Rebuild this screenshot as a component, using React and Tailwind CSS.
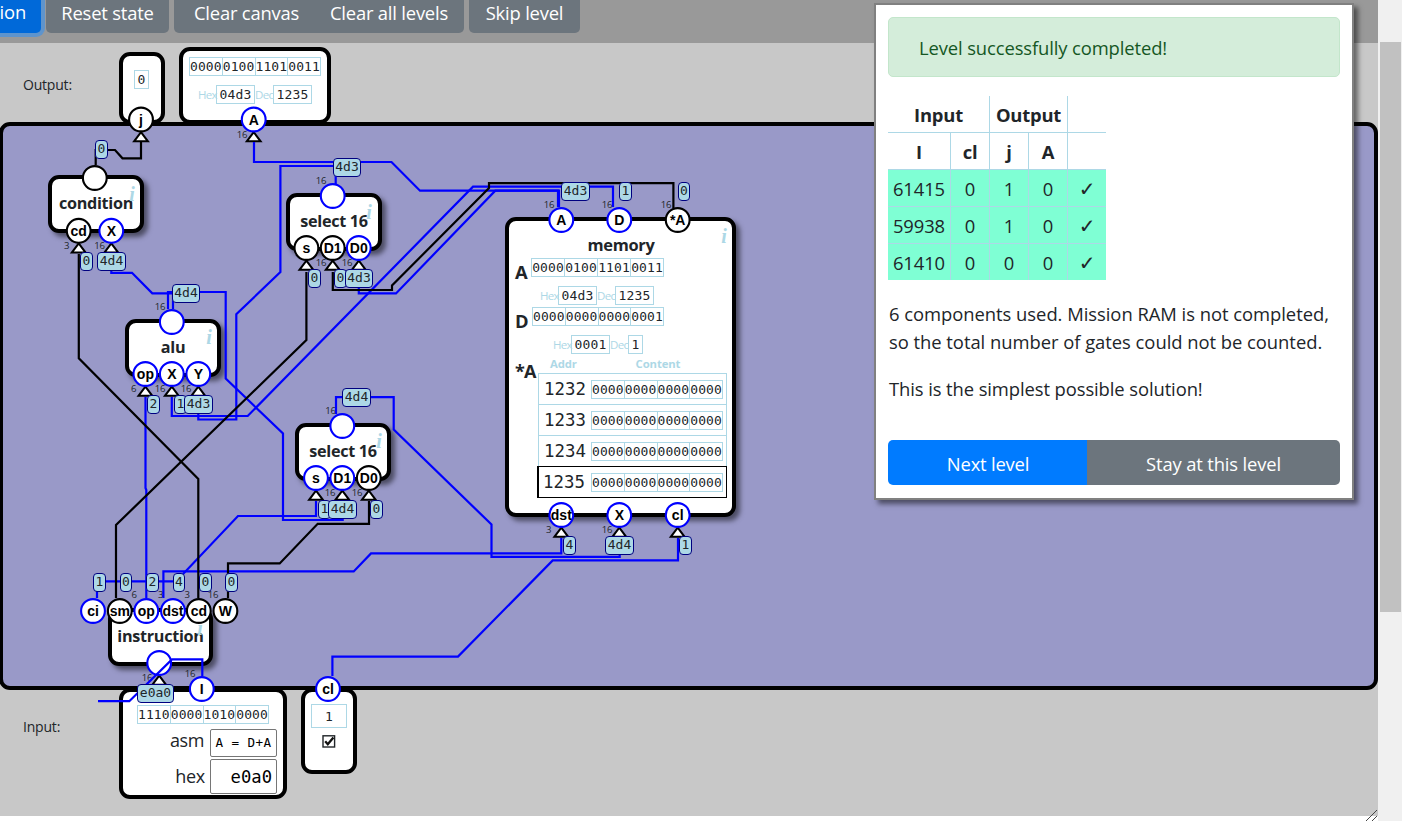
import React from "react";

const BLUE = "#0000ff";
const BLACK = "#000000";

// Wires of the circuit, in canvas coordinates
const wires = [
  { c: BLUE, p: "254,142 254,162 391.5,162 420,190.7 558,190.7 558,207" },
  { c: BLUE, p: "335.7,184 335.7,166 280.4,166 280.4,272 236.3,314.3 236.3,419.5 198.3,419.5 198.3,397" },
  { c: BLUE, p: "613,207 613,186.7 473,186.7 247.7,416 171.8,416 171.8,397" },
  { c: BLUE, p: "559,207 559,190.7 495.3,190.7 396,293.4 358.8,293.4 358.8,272" },
  { c: BLUE, p: "173,309 173,293.3 152.3,293.3 132,272.8 111.3,272.8 111.3,254" },
  { c: BLUE, p: "168,309 168,292 225.7,292 225.7,378.5 283,433.5 283,520 342.7,520 342.7,502" },
  { c: BLUE, p: "145.5,397 145.5,488 146.3,490 146.3,598" },
  { c: BLUE, p: "336,414 336,397.2 393.7,397.2 393.7,429.5 491.5,524.5 491.5,556.8 619.7,556.8 619.7,538" },
  { c: BLUE, p: "97,598 97,581.4 176,581.4 238,516 316,516 316,501" },
  { c: BLUE, p: "163.4,598 163.4,571.4 353.7,571.4 371,553.4 561.3,553.4 561.3,538" },
  { c: BLUE, p: "332.4,676 332.4,656.6 458,656.6 552.7,560.4 678,560.4 678,538" },
  { c: BLUE, p: "202.3,676 202.3,659.4 172,659.4 129.3,701.2 98,701.2" },
  { c: BLACK, p: "95.7,165 95.7,150 115,150 122.5,158.3 141,158.3 141,142" },
  { c: BLACK, p: "673.4,208 673.4,183.2 489,183.2 489,188 392,285.5 392,290 332.8,290 332.8,272" },
  { c: BLACK, p: "306.4,272 306.4,340 116,525 116,598" },
  { c: BLACK, p: "78.8,254 78.8,358.3 198.3,479 198.3,598" },
  { c: BLACK, p: "228,598 228,563.4 279.7,563.4 317.7,523.8 369,523.8 369,501" },
];

// Pins: centre, caption, blue when carrying a value, arrow for inputs
const pins = [
  [141, 119.5, "j", 0, 1], [253.7, 119.5, "A", 1, 1],
  [94.8, 178, "", 0, 0], [78.7, 230.8, "cd", 0, 1], [111.3, 230.8, "X", 1, 1],
  [332.7, 196, "", 1, 0], [306.4, 248, "s", 0, 1], [332.7, 248, "D1", 0, 1], [358.8, 248, "D0", 1, 1],
  [171.8, 322, "", 1, 0], [145.4, 374, "op", 1, 1], [171.8, 374, "X", 1, 1], [198.3, 374, "Y", 1, 1],
  [342.3, 426, "", 1, 0], [316, 478, "s", 1, 1], [342.3, 478, "D1", 1, 1], [368.8, 478, "D0", 0, 1],
  [561.3, 220, "A", 1, 0], [619.3, 220, "D", 1, 0], [677.7, 220, "*A", 0, 0],
  [561.3, 515, "dst", 1, 1], [619.3, 515, "X", 1, 1], [677.7, 515, "cl", 1, 1],
  [93, 611, "ci", 1, 0], [119.8, 611, "sm", 0, 0], [146.3, 611, "op", 1, 0],
  [173, 611, "dst", 1, 0], [198.8, 611, "cd", 0, 0], [225.4, 611, "W", 0, 0],
  [159.2, 663, "", 1, 1], [201.8, 689, "I", 1, 0], [328, 689, "cl", 1, 0],
];

// Values on the wires: x, y, width, text
const values = [
  [95, 140, 13, "0"], [333, 158, 28, "4d3"], [80, 252, 13, "0"], [97, 252, 29, "4d4"],
  [172, 284, 28, "4d4"], [147, 395, 13, "2"], [174, 395, 13, "1"], [184, 395, 29, "4d3"],
  [308, 269, 13, "0"], [334, 269, 13, "0"], [345, 269, 28, "4d3"],
  [342, 388, 29, "4d4"], [318, 500, 13, "1"], [328, 500, 29, "4d4"], [370, 500, 13, "0"],
  [561, 182, 29, "4d3"], [619, 182, 13, "1"], [678, 182, 12, "0"],
  [563, 536, 13, "4"], [605, 536, 29, "4d4"], [679, 536, 13, "1"],
  [93, 573, 13, "1"], [120, 573, 12, "0"], [146, 573, 13, "2"],
  [173, 573, 12, "4"], [199, 573, 13, "0"], [225, 573, 13, "0"],
  [137, 684, 37, "e0a0"],
];

// Bus widths: right edge, vertical centre, bits
const widths = [
  [247, 135, 16], [69, 246, 3], [104.5, 246, 16], [326, 181, 16], [326, 263, 16], [352, 263, 16],
  [165, 306.5, 16], [136, 389, 6], [165, 389, 16], [191, 389, 16], [335.5, 411, 16], [335, 493, 16],
  [362, 493, 16], [554, 205, 16], [612, 205, 16], [671, 205, 16], [551, 530, 3], [612, 530, 16],
  [136.5, 595, 6], [163, 595, 3], [189.5, 595, 3], [218, 595, 16], [152, 678, 16], [195, 674, 16],
];

const infos = [[132, 195], [209, 338], [369, 213], [379, 442], [724, 237], [200, 629]];

const MONO = "font-['DejaVu_Sans_Mono','Liberation_Mono',monospace]";

function Binary({ value, className = "" }) {
  return (
    <div className={`flex h-[19px] shrink-0 border border-[#add8e6] ${MONO} text-[13px] leading-[17px] tracking-[0.1px] text-[#212529] ${className}`}>
      {value.match(/.{4}/g).map((n, i) => (
        <span key={i} className="flex flex-1 justify-center border-r border-[#add8e6] last:border-r-0">{n}</span>
      ))}
    </div>
  );
}

function Field({ label, value, className }) {
  return (
    <div className="flex items-center">
      <span className="w-[18px] text-[11.5px] leading-[19px] tracking-[-0.7px] text-[#add8e6]">{label}</span>
      <span className={`h-[19px] border border-[#add8e6] text-center ${MONO} text-[13px] leading-[17px] tracking-[0.2px] ${className}`}>{value}</span>
    </div>
  );
}

function Box({ className, children }) {
  return <div className={`absolute rounded-[11px] border-4 border-black bg-white ${className}`}>{children}</div>;
}

function Gate({ className, title }) {
  return (
    <Box className={`flex justify-center shadow-[4px_4px_5px_rgba(0,0,0,0.5)] ${className}`}>
      <span className="whitespace-nowrap text-[16.2px] font-bold leading-[22px] tracking-[-0.3px]">{title}</span>
    </Box>
  );
}

function Memory() {
  return (
    <Box className="left-[505px] top-[217px] flex h-[300px] w-[231px] flex-col pl-[6px] pr-[5px] shadow-[4px_4px_5px_rgba(0,0,0,0.5)]">
      <h2 className="mt-[13px] h-[24px] text-center text-[16.4px] font-bold leading-[22px] tracking-[-0.3px]">memory</h2>
      <div className="flex h-[49px]">
        <b className="w-[16px] text-[18.4px] leading-[28px]">A</b>
        <div className="flex flex-col gap-[9px]">
          <Binary value="0000010011010011" className="w-[133px]" />
          <div className="flex pl-[9px]">
            <Field label="Hex" value="04d3" className="w-[39px]" />
            <Field label="Dec" value="1235" className="w-[39px]" />
          </div>
        </div>
      </div>
      <div className="flex h-[49px]">
        <b className="w-[17px] text-[18.4px] leading-[28px]">D</b>
        <div className="flex flex-col gap-[9px]">
          <Binary value="0000000000000001" className="w-[132px]" />
          <div className="flex pl-[21px]">
            <Field label="Hex" value="0001" className="w-[39px]" />
            <Field label="Dec" value="1" className="w-[15px]" />
          </div>
        </div>
      </div>
      <div className="flex">
        <b className="w-[23px] text-[18px] leading-[30px] tracking-[-0.8px]">*A</b>
        <div className="w-[189px]">
          <div className="flex h-[17px] text-[11.3px] font-bold leading-[16px] tracking-[-0.1px] text-[#add8e6]">
            <span className="w-[51px] text-center">Addr</span>
            <span className="flex-1 text-center">Content</span>
          </div>
          {[1232, 1233, 1234].map((a) => (
            <div key={a} className="flex h-[31px] items-center justify-between border-x border-t border-[#add8e6] pl-[5px] pr-[3px]">
              <span className={`${MONO} text-[17.4px]`}>{a}</span>
              <Binary value="0000000000000000" className="w-[132px]" />
            </div>
          ))}
          <div className="-ml-px flex h-[32px] items-center justify-between border border-l-2 border-black pl-[4px] pr-[3px]">
            <span className={`${MONO} text-[17.4px]`}>1235</span>
            <Binary value="0000000000000000" className="w-[132px]" />
          </div>
        </div>
      </div>
    </Box>
  );
}

function Dialog() {
  const cell = "border-l border-t border-[#add8e6] first:border-l-0";
  const rows = [["61415", "0", "1", "0", "✓"], ["59938", "0", "1", "0", "✓"], ["61410", "0", "0", "0", "✓"]];
  return (
    <section className="absolute left-[874px] top-[3px] flex h-[497px] w-[480px] flex-col border-2 border-[#808080] bg-white px-[12px] pt-[12px] text-[18.4px] tracking-[-0.2px] text-[#212529] shadow-[4px_4px_5px_rgba(0,0,0,0.5)]">
      <div className="flex h-[60px] items-center rounded-[5px] border border-[#c3e6cb] bg-[#d4edda] pl-[30px] pt-[2px] tracking-[-0.11px] text-[#155724]">
        Level successfully completed!
      </div>
      <table className="mt-[19px] w-[218px] table-fixed border-separate border-spacing-0 text-center leading-[34px]">
        <colgroup>
          <col className="w-[62px]" /><col className="w-[39px]" /><col className="w-[39px]" /><col className="w-[39px]" /><col className="w-[39px]" />
        </colgroup>
        <thead>
          <tr className="h-[36px]">
            <th colSpan={2} className="pt-[2px]">Input</th>
            <th colSpan={2} className="border-l border-[#add8e6] pt-[2px]">Output</th>
            <th className="border-l border-[#add8e6]" />
          </tr>
          <tr className="h-[37px]">
            {["I", "cl", "j", "A", ""].map((h, i) => <th key={i} className={`${cell} pt-[2px]`}>{h}</th>)}
          </tr>
        </thead>
        <tbody>
          {rows.map((r) => (
            <tr key={r[0]} className="h-[37px] bg-[#7fffd4]">
              {r.map((v, i) => (
                <td key={i} className={`${cell} pt-[2px] tracking-[-0.1px] last:font-['DejaVu_Sans',sans-serif] last:text-[20px] last:font-bold`}>{v}</td>
              ))}
            </tr>
          ))}
        </tbody>
      </table>
      <p className="mt-[20px] whitespace-nowrap pl-px leading-[28px] tracking-[-0.03px]">
        6 components used. Mission RAM is not completed,<br />so the total number of gates could not be counted.
      </p>
      <p className="mt-[19px] whitespace-nowrap pl-px leading-[28px] tracking-[-0.09px]">This is the simplest possible solution!</p>
      <div className="mt-[37px] flex h-[45px] overflow-hidden rounded-[5px] text-white">
        <button className="w-[199px] bg-[#007bff] pl-px pt-[3px]">Next level</button>
        <button className="flex-1 bg-[#6c757d] pt-[3px] tracking-[-0.15px]">Stay at this level</button>
      </div>
    </section>
  );
}

export default function App() {
  return (
    <div className="relative flex h-[821px] w-[1402px] overflow-hidden bg-white font-['Open_Sans','Noto_Sans',sans-serif] text-[#212529]">
      <main className="flex w-[1378px] flex-col">
        <nav className="flex h-[43px] items-start gap-[5px] bg-[#999999] text-[18.4px] leading-[25px] tracking-[-0.2px] text-white">
          <button className="flex h-[33px] w-[41px] justify-end rounded-br-[5px] bg-[#0069d9] pb-[8px] pr-[15px] shadow-[0_0_0_4px_rgba(38,143,255,0.5)]"><span className="-mt-px">ion</span></button>
          <button className="h-[33px] w-[123px] rounded-b-[5px] bg-[#6c757d] pb-[10px]">Reset state</button>
          <div className="flex h-[33px] w-[290px] rounded-b-[5px] bg-[#6c757d] pb-[10px]">
            <button className="w-[145px]">Clear canvas</button>
            <button className="w-[140px]">Clear all levels</button>
          </div>
          <button className="h-[33px] w-[111px] rounded-b-[5px] bg-[#6c757d] pb-[10px]">Skip level</button>
        </nav>
        <div className="flex h-[773px] flex-col bg-[#c8c8c8] text-[14px] tracking-[-0.2px]">
          <div className="h-[79px] pl-[23px] pt-[31px] leading-[21px]">Output:</div>
          <div className="-ml-px h-[568px] rounded-[11px] border-4 border-black bg-[#9999c8]" />
          <div className="pl-[23px] pt-[26px] leading-[21px]">Input:</div>
        </div>
      </main>
      <aside className="flex w-[24px] flex-col bg-[#f0f0f0] pl-[2px] pr-px pt-[42px]">
        <div className="h-[570px] bg-[#c1c1c1]" />
      </aside>

      <div className="absolute inset-0">
        <Box className="left-[119px] top-[52px] flex h-[72px] w-[46px] justify-center pr-px pt-[14px]">
          <span className={`h-[19px] w-[15px] border border-[#add8e6] text-center ${MONO} text-[13px] leading-[17px]`}>0</span>
        </Box>
        <Box className="left-[179px] top-[47px] flex h-[77px] w-[152px] flex-col gap-[9px] pl-[6px] pt-[6px]">
          <Binary value="0000010011010011" className="w-[132px]" />
          <div className="flex pl-[9px]">
            <Field label="Hex" value="04d3" className="w-[39px]" />
            <Field label="Dec" value="1235" className="w-[39px]" />
          </div>
        </Box>
        <Gate className="left-[48px] top-[175px] h-[58px] w-[96px] pt-[13px]" title="condition" />
        <Gate className="left-[125px] top-[319px] h-[58px] w-[96px] pt-[13px]" title="alu" />
        <Gate className="left-[286px] top-[193px] h-[58px] w-[96px] pt-[13px]" title="select 16" />
        <Gate className="left-[295px] top-[423px] h-[58px] w-[96px] pt-[13px]" title="select 16" />
        <Gate className="left-[108px] top-[608px] h-[58px] w-[105px] pt-[13px]" title="instruction" />
        <Memory />

        <Box className="left-[119px] top-[688px] flex h-[111px] w-[168px] flex-col pl-[14px] pr-[6px] pt-[13px]">
          <Binary value="1110000010100000" className="w-[132px]" />
          <label className="mt-[5px] flex h-[28px] items-center justify-end gap-[6px]">
            <span className="pb-[5px] text-[18px] tracking-[-0.4px]">asm</span>
            <span className={`flex h-[28px] w-[67px] items-center justify-center rounded-[2px] border border-[#767676] ${MONO} text-[12.6px] whitespace-pre tracking-[0.4px] text-black`}>A = D+A</span>
          </label>
          <label className="mt-[2px] flex h-[35px] items-center justify-end gap-[5px]">
            <span className="pb-px text-[18px] tracking-[-0.3px]">hex</span>
            <span className={`flex h-[35px] w-[67px] items-center justify-end rounded-[2px] border border-[#767676] pr-[4px] pt-[2px] ${MONO} text-[17.2px] text-black`}>e0a0</span>
          </label>
        </Box>
        <Box className="left-[301px] top-[688px] flex h-[86px] w-[56px] flex-col items-center pt-[12px]">
          <span className={`h-[24px] w-[36px] border border-[#add8e6] text-center ${MONO} text-[13px] leading-[23px]`}>1</span>
          <svg className="mt-[7px]" width="14" height="13" viewBox="0 0 14 13">
            <rect x="1" y="0.8" width="11.6" height="11.2" fill="#fff" stroke="#212529" strokeWidth="1.4" />
            <path d="M3.2 6.2 L5.8 9.2 L11.4 2.4" fill="none" stroke="#111" strokeWidth="2.3" />
          </svg>
        </Box>

        {infos.map(([x, y]) => (
          <i key={`${x}-${y}`} style={{ left: x - 6, top: y - 12 }} className="absolute w-[12px] text-center font-['Liberation_Serif',serif] text-[20px] font-bold leading-[23px] text-[#add8e6]">i</i>
        ))}
        {widths.map(([x, y, n], i) => (
          <span key={i} style={{ left: x - 20, top: y - 7 }} className="absolute w-[20px] text-right text-[9.6px] leading-[14px] tracking-[-0.4px]">{n}</span>
        ))}

        <svg className="absolute inset-0" width="1378" height="821">
          {pins.map(([x, y, , on, arrow], i) => (
            <g key={i} fill="#fff">
              {arrow ? <path d={`M${x} ${y + 12.6} l6.9 9.2 h-13.8 z`} stroke={BLACK} strokeWidth="2" /> : null}
              <circle cx={x} cy={y} r="11.9" stroke={on ? BLUE : BLACK} strokeWidth="2.1" />
            </g>
          ))}
          {wires.map((w) => (
            <polyline key={w.p} points={w.p} fill="none" stroke={w.c} strokeWidth="2.2" />
          ))}
          <path d="M1366 821 L1377 810 M1372 821 L1377 816" stroke="#444" strokeWidth="1" />
        </svg>

        {pins.map(([x, y, t], i) => t && (
          <span key={i} style={{ left: x - 15, top: y - 9 }} className="absolute w-[30px] text-center font-['Liberation_Sans',sans-serif] text-[14px] font-bold leading-[18px] text-black">{t}</span>
        ))}
        {values.map(([x, y, w, t], i) => (
          <span key={i} style={{ left: x, top: y, width: w }} className={`absolute flex h-[19px] items-center justify-center rounded-[4px] border border-[#000080] bg-[#add8e6] pb-px ${MONO} text-[13px] leading-[16px] text-[#212529]`}>{t}</span>
        ))}
      </div>

      <Dialog />
    </div>
  );
}
